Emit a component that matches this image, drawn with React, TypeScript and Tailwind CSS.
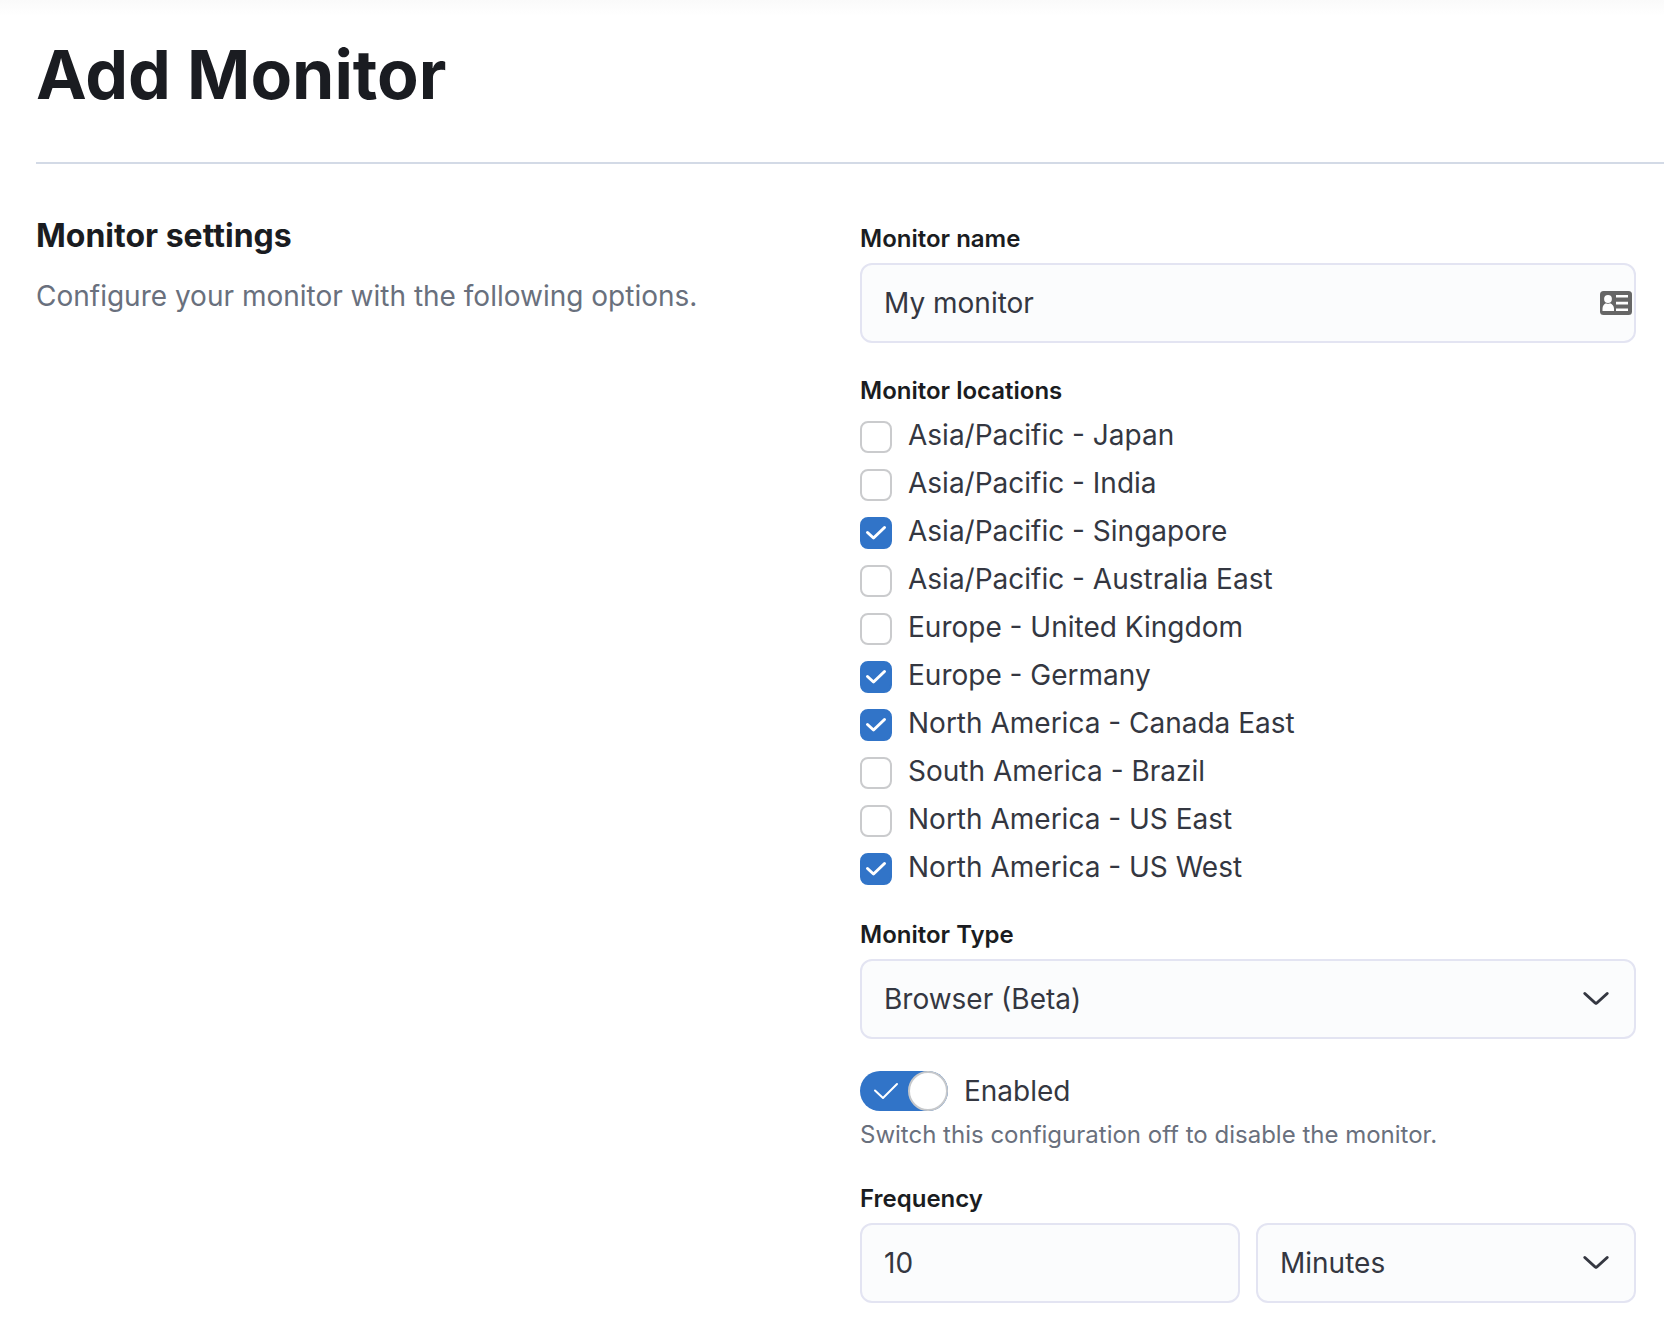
import { useState, type ReactNode } from "react";

const LOCATIONS = [
  { id: "japan", label: "Asia/Pacific - Japan", checked: false },
  { id: "india", label: "Asia/Pacific - India", checked: false },
  { id: "singapore", label: "Asia/Pacific - Singapore", checked: true },
  { id: "australia-east", label: "Asia/Pacific - Australia East", checked: false },
  { id: "united-kingdom", label: "Europe - United Kingdom", checked: false },
  { id: "germany", label: "Europe - Germany", checked: true },
  { id: "canada-east", label: "North America - Canada East", checked: true },
  { id: "brazil", label: "South America - Brazil", checked: false },
  { id: "us-east", label: "North America - US East", checked: false },
  { id: "us-west", label: "North America - US West", checked: true },
];

const LABEL = "block text-2xl leading-8 font-semibold text-[#1a1c21]";
const CONTROL =
  "block h-20 w-full appearance-none rounded-xl border-2 border-[#e3e4f2] bg-[#fbfcfd] px-[22px] text-[28px] leading-10 text-[#343741] outline-none focus:border-[#3174c8]";

function Chevron() {
  return (
    <svg
      viewBox="0 0 32 32"
      className="pointer-events-none absolute top-6 right-6 size-8 text-[#343741]"
      fill="none"
      stroke="currentColor"
      strokeWidth="3"
      strokeLinecap="round"
      strokeLinejoin="round"
      aria-hidden="true"
    >
      <path d="M4.800 10.500 15.200 20a1.200 1.200 0 0 0 1.600 0L27.200 10.500" />
    </svg>
  );
}

function ContactCard() {
  return (
    <svg viewBox="0 0 32 24" className="pointer-events-none absolute top-7 right-1 h-6 w-8" aria-hidden="true">
      <rect width="32" height="24" rx="3.5" fill="#666" />
      <g fill="#fff">
        <ellipse cx="8" cy="8" rx="3.900" ry="4.100" />
        <path d="M2.500 20v-2.300c0-2.900 1.500-4.900 3.500-5.500 1.200.8 2.800.8 4 0 2.200.6 4 2.600 4 5.500V20z" />
        <path d="M16 4h12v2.600H16zM16 10.800h12v2.600H16zM16 17.400h12V20H16z" />
      </g>
    </svg>
  );
}

function Select({ id, label, options }: { id: string; label?: string; options: string[] }) {
  return (
    <div className="relative">
      <select id={id} aria-label={label} className={CONTROL}>
        {options.map((option) => (
          <option key={option}>{option}</option>
        ))}
      </select>
      <Chevron />
    </div>
  );
}

function Field({ id, label, children }: { id: string; label: string; children: ReactNode }) {
  return (
    <div className="flex flex-col gap-2">
      <label htmlFor={id} className={LABEL}>
        {label}
      </label>
      {children}
    </div>
  );
}

function LocationCheckbox({ id, label, checked }: { id: string; label: string; checked: boolean }) {
  return (
    <div className="flex items-start gap-4">
      <span className="relative mt-1.5 size-8 shrink-0">
        <input
          id={id}
          type="checkbox"
          defaultChecked={checked}
          className="peer block size-8 appearance-none rounded-lg border-2 border-[#cacbcd] bg-white checked:border-[#3174c8] checked:bg-[#3174c8]"
        />
        <svg
          viewBox="0 0 32 32"
          className="pointer-events-none absolute inset-0 hidden size-8 peer-checked:block"
          fill="none"
          stroke="#fff"
          strokeWidth="3"
          strokeLinecap="round"
          strokeLinejoin="round"
          aria-hidden="true"
        >
          <path d="M7.500 15.500 13.500 21 24.500 10.500" />
        </svg>
      </span>
      <label htmlFor={id} className="text-[28px] leading-10 text-[#343741]">
        {label}
      </label>
    </div>
  );
}

function EnabledSwitch() {
  const [on, setOn] = useState(true);
  return (
    <div className="flex flex-col gap-2">
      <div className="flex items-center gap-4">
        <button
          id="enabled"
          type="button"
          role="switch"
          aria-checked={on}
          aria-labelledby="enabled-label"
          aria-describedby="enabled-help"
          onClick={() => setOn(!on)}
          className={
            on
              ? "flex h-10 w-[88px] items-center justify-end rounded-full bg-[#3174c8]"
              : "flex h-10 w-[88px] items-center justify-start rounded-full bg-[#8a909b]"
          }
        >
          {on && (
            <svg
              viewBox="0 0 48 40"
              className="h-10 w-12"
              fill="none"
              stroke="#fff"
              strokeWidth="2"
              strokeLinecap="round"
              strokeLinejoin="round"
              aria-hidden="true"
            >
              <path d="M15 19.500 23 27 37 13" />
            </svg>
          )}
          <span className="size-10 rounded-full border-2 border-[#c6c8cb] bg-white" />
        </button>
        <label id="enabled-label" htmlFor="enabled" className="text-[28px] leading-10 text-[#343741]">
          Enabled
        </label>
      </div>
      <p id="enabled-help" className="text-2xl leading-8 text-[#69707d]">
        Switch this configuration off to disable the monitor.
      </p>
    </div>
  );
}

export default function App() {
  return (
    <main className="min-h-screen bg-white pl-9 font-['Inter',sans-serif]">
      <div className="-ml-9 h-4 bg-linear-to-b from-[#fafafa] to-white" />
      <header className="border-b-2 border-[#d3dae6] pt-[18px] pb-12">
        <h1 className="text-[68px] leading-[80px] font-bold text-[#1a1c21]">Add Monitor</h1>
      </header>

      <form className="grid grid-cols-2 gap-12 pt-[52px] pr-7 pb-5">
        <section className="flex flex-col gap-5">
          <h2 className="text-[32px] leading-10 font-bold text-[#1a1c21]">Monitor settings</h2>
          <p className="text-[28px] leading-10 text-[#69707d]">Configure your monitor with the following options.</p>
        </section>

        <section className="flex flex-col gap-8 pt-[7px]">
          <Field id="monitor-name" label="Monitor name">
            <div className="relative">
              <input id="monitor-name" type="text" defaultValue="My monitor" className={CONTROL} />
              <ContactCard />
            </div>
          </Field>

          <fieldset>
            <legend className={LABEL}>Monitor locations</legend>
            <div className="flex flex-col gap-2 pt-2">
              {LOCATIONS.map((location) => (
                <LocationCheckbox key={location.id} {...location} />
              ))}
            </div>
          </fieldset>

          <Field id="monitor-type" label="Monitor Type">
            <Select id="monitor-type" options={["Browser (Beta)", "HTTP", "TCP", "ICMP"]} />
          </Field>

          <EnabledSwitch />

          <Field id="frequency" label="Frequency">
            <div className="grid grid-cols-2 gap-4">
              <input id="frequency" type="text" inputMode="numeric" defaultValue="10" className={CONTROL} />
              <Select id="frequency-unit" label="Frequency unit" options={["Minutes", "Seconds"]} />
            </div>
          </Field>
        </section>
      </form>
    </main>
  );
}
